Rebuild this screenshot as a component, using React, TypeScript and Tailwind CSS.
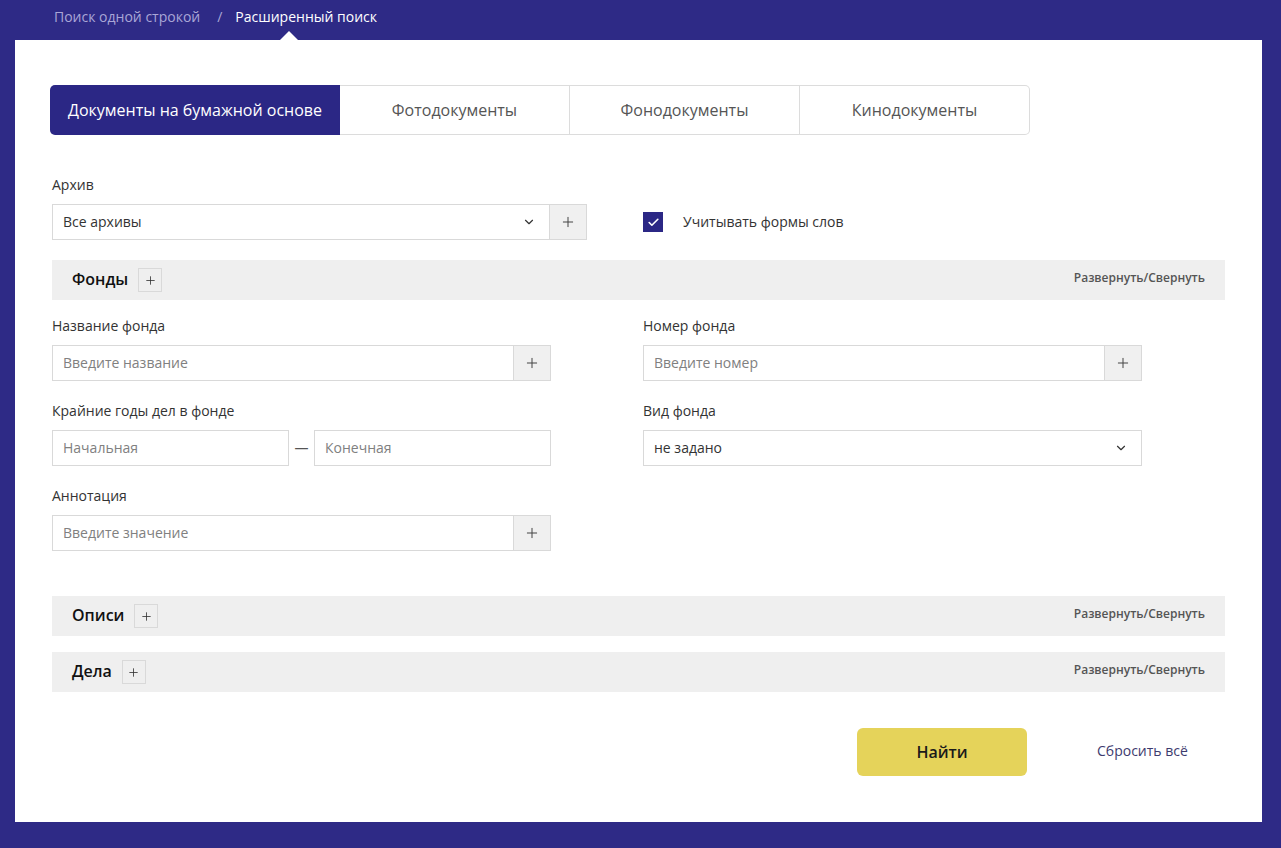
import React from 'react';
import { Check, ChevronDown, Plus } from 'lucide-react';

const tabs = ['Документы на бумажной основе', 'Фотодокументы', 'Фонодокументы', 'Кинодокументы'];

function Label({ children }: { children: React.ReactNode }) {
  return <div className="text-sm leading-5 text-[#333] mb-[9px]">{children}</div>;
}

function PlusBox() {
  return (
    <div className="w-[37px] shrink-0 flex items-center justify-center bg-[#f0f0f0] border-l border-[#d9d9d9]">
      <Plus className="w-4 h-4 text-[#444]" strokeWidth={1.5} />
    </div>
  );
}

function InputPlus({ placeholder }: { placeholder: string }) {
  return (
    <div className="flex h-9 border border-[#d9d9d9] bg-white">
      <div className="flex-1 flex items-center px-[10px] text-sm text-[#808080]">{placeholder}</div>
      <PlusBox />
    </div>
  );
}

function SelectBox({ value, withPlus }: { value: string; withPlus?: boolean }) {
  return (
    <div className="flex h-9 border border-[#d9d9d9] bg-white">
      <div className="flex-1 flex items-center justify-between pl-[10px] pr-[13px] text-sm text-[#333]">
        <span>{value}</span>
        <ChevronDown className="w-[14px] h-[14px] text-[#333]" strokeWidth={2} />
      </div>
      {withPlus && <PlusBox />}
    </div>
  );
}

function SectionHeader({ title }: { title: string }) {
  return (
    <div className="h-10 bg-[#efefef] flex items-center justify-between pl-5 pr-5">
      <div className="flex items-center gap-[10px]">
        <span className="text-base font-semibold text-[#111] -mt-[2px]">{title}</span>
        <span className="w-6 h-6 border border-[#d9d9d9] flex items-center justify-center bg-[#efefef]">
          <Plus className="w-[13px] h-[13px] text-[#333]" strokeWidth={1.5} />
        </span>
      </div>
      <span className="text-xs font-semibold text-[#555] -mt-[4px]">Развернуть/Свернуть</span>
    </div>
  );
}

export default function App() {
  return (
    <div className="min-h-screen bg-[#2e2a86] font-['Open_Sans',sans-serif]">
      <div className="h-10 flex items-start pt-[7px] pl-[54px] text-sm leading-5">
        <span className="text-[#a9a6d6]">Поиск одной строкой</span>
        <span className="text-[#a9a6d6] ml-[17px] mr-[13px]">/</span>
        <span className="relative text-white font-medium">
          Расширенный поиск
          <span className="absolute left-[45px] top-[24px] w-0 h-0 border-l-[9px] border-r-[9px] border-b-[9px] border-l-transparent border-r-transparent border-b-white" />
        </span>
      </div>

      <div className="ml-[15px] w-[1247px] h-[782px] bg-white px-[37px] pt-[45px]">
        <div className="flex ml-[-2px]">
          {tabs.map((t, i) =>
            i === 0 ? (
              <div key={t} className="w-[290px] h-[50px] flex items-center justify-center bg-[#2b2785] text-white text-base rounded-l-[5px]">
                {t}
              </div>
            ) : (
              <div
                key={t}
                className={`w-[230px] h-[50px] flex items-center justify-center text-base text-[#555] border-y border-r border-[#dcdcdc] ${i === 3 ? 'rounded-r-[5px]' : ''}`}
              >
                {t}
              </div>
            )
          )}
        </div>

        <div className="mt-[40px] flex items-end gap-[56px]">
          <div className="w-[535px]">
            <Label>Архив</Label>
            <SelectBox value="Все архивы" withPlus />
          </div>
          <div className="h-9 flex items-center gap-5">
            <span className="w-5 h-5 bg-[#2b2785] flex items-center justify-center">
              <Check className="w-[13px] h-[13px] text-white" strokeWidth={3} />
            </span>
            <span className="text-sm text-[#333]">Учитывать формы слов</span>
          </div>
        </div>

        <div className="mt-5">
          <SectionHeader title="Фонды" />
        </div>

        <div className="mt-4 grid grid-cols-[499px_499px] gap-x-[92px] gap-y-5">
          <div>
            <Label>Название фонда</Label>
            <InputPlus placeholder="Введите название" />
          </div>
          <div>
            <Label>Номер фонда</Label>
            <InputPlus placeholder="Введите номер" />
          </div>
          <div>
            <Label>Крайние годы дел в фонде</Label>
            <div className="flex items-center">
              <div className="w-[237px] h-9 border border-[#d9d9d9] flex items-center px-[10px] text-sm text-[#808080]">Начальная</div>
              <span className="w-[25px] text-center text-sm text-[#555]">—</span>
              <div className="w-[237px] h-9 border border-[#d9d9d9] flex items-center px-[10px] text-sm text-[#808080]">Конечная</div>
            </div>
          </div>
          <div>
            <Label>Вид фонда</Label>
            <SelectBox value="не задано" />
          </div>
          <div>
            <Label>Аннотация</Label>
            <InputPlus placeholder="Введите значение" />
          </div>
        </div>

        <div className="mt-[45px] flex flex-col gap-4">
          <SectionHeader title="Описи" />
          <SectionHeader title="Дела" />
        </div>

        <div className="mt-9 flex items-center">
          <button type="button" className="ml-[805px] w-[170px] h-12 rounded-md bg-[#e5d35a] text-base font-semibold text-[#1a1a1a]">
            Найти
          </button>
          <span className="ml-[70px] text-sm text-[#3d3b6e] -mt-[2px]">Сбросить всё</span>
        </div>
      </div>
    </div>
  );
}
